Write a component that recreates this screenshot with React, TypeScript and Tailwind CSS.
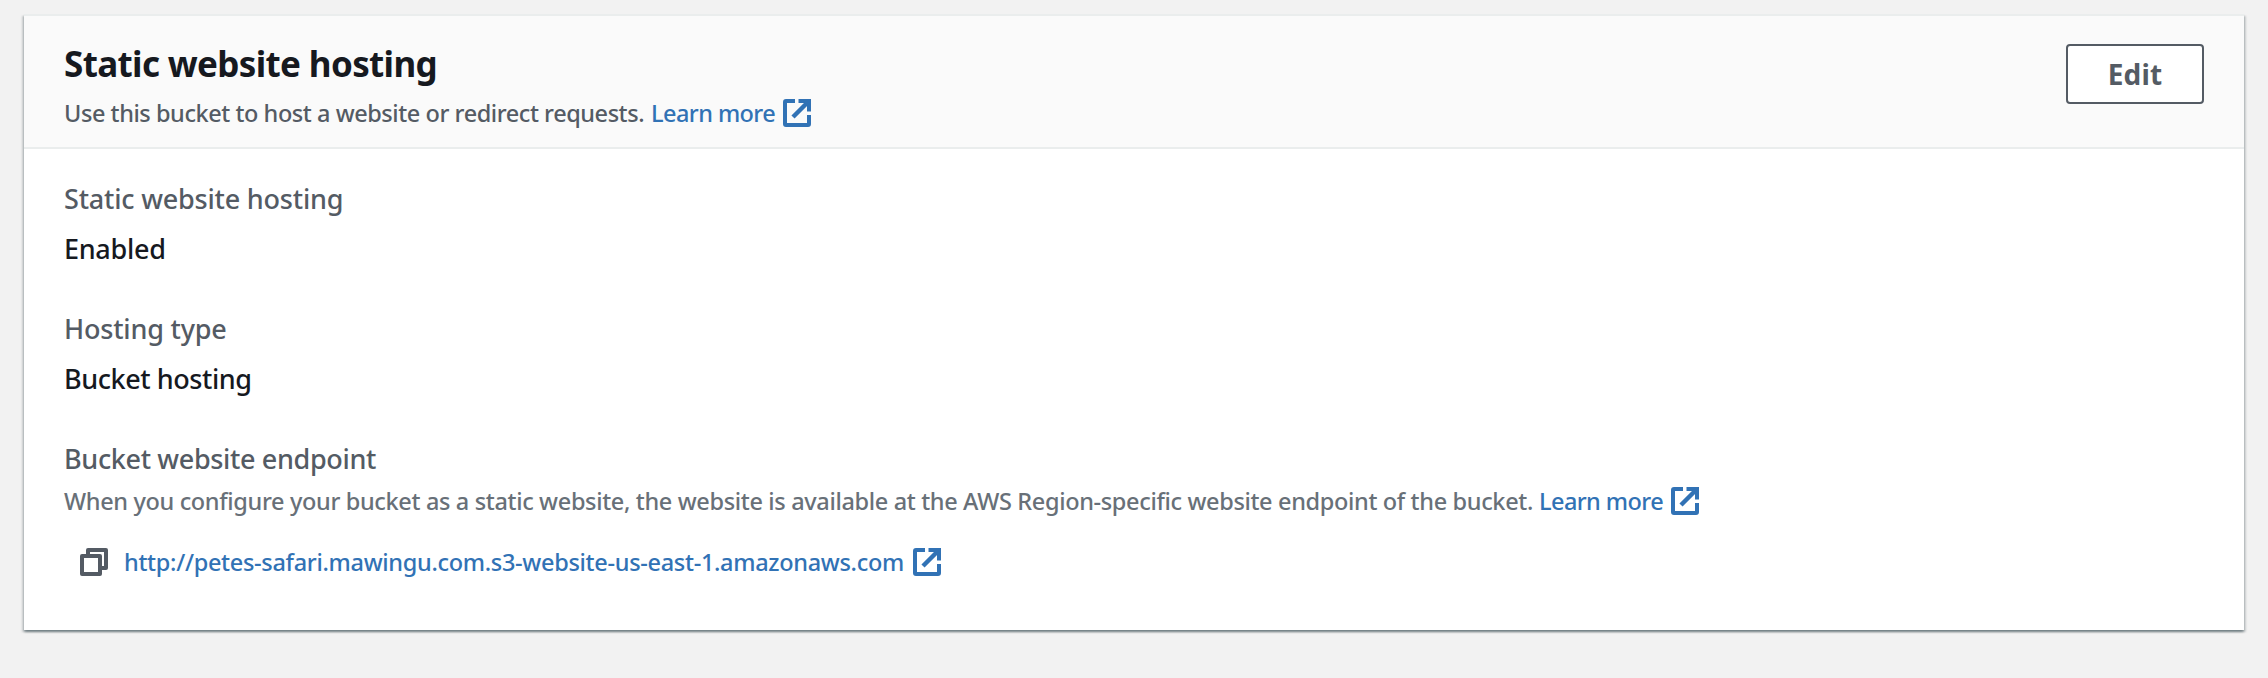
function ExternalIcon() {
  return (
    <svg viewBox="0 0 28 28" className="h-7 w-7 shrink-0" fill="none" stroke="currentColor" strokeWidth="4">
      <path d="M12 2H3Q2 2 2 3V25Q2 26 3 26H25Q26 26 26 25V16" />
      <path d="M15.5 2H26V12.5" />
      <path d="M25 3L10 18" strokeWidth="4.5" />
    </svg>
  );
}

function CopyIcon() {
  return (
    <svg viewBox="0 0 28 28" className="h-7 w-7 shrink-0" fill="none" stroke="currentColor" strokeWidth="4" strokeLinejoin="round">
      <path d="M2 8H20V26H2Z" />
      <path d="M8 8V2H26V20H20" />
    </svg>
  );
}

export default function App() {
  return (
    <div className="h-[678px] w-[2268px] overflow-hidden bg-[#f2f2f2] px-6 pt-[14px] font-['Noto_Sans',sans-serif] text-[27px] leading-9 font-medium whitespace-nowrap text-[#16191f]">
      <section className="h-[616px] bg-white shadow-[0_2px_2px_0_rgba(0,28,36,0.35),2px_2px_2px_0_rgba(0,28,36,0.15),-2px_2px_2px_0_rgba(0,28,36,0.15)]">
        <header className="flex h-[135px] items-start justify-between border-y-2 border-t-[#eaeded] border-b-[#eaeded] bg-[#fafafa] pr-4 pl-10">
          <div className="pt-[26px]">
            <h2 className="text-[35px] leading-[44px] font-bold tracking-[-0.644px]">Static website hosting</h2>
            <div className="mt-[11px] flex items-center text-[23.5px] leading-8 text-[#545b64]">
              <p className="tracking-[-0.443px]">Use this bucket to host a website or redirect requests.</p>
              <a className="ml-[7px] tracking-[-0.58px] text-[#3172b5]">Learn more</a>
              <span className="ml-2 text-[#3172b5]"><ExternalIcon /></span>
            </div>
          </div>
          <button className="mt-7 mr-6 h-[60px] w-[138px] rounded-[4px] border-2 border-[#545b64] bg-white text-[28px] font-bold tracking-[0.2px] text-[#545b64]">
            Edit
          </button>
        </header>
        <dl className="flex flex-col gap-11 px-10 pt-8">
          <div>
            <dt className="tracking-[-0.2px] text-[#545b64]">Static website hosting</dt>
            <dd className="mt-[14px] tracking-[-0.3px]">Enabled</dd>
          </div>
          <div>
            <dt className="tracking-[-0.2px] text-[#545b64]">Hosting type</dt>
            <dd className="mt-[14px] tracking-[-0.43px]">Bucket hosting</dd>
          </div>
          <div>
            <dt className="tracking-[-0.351px] text-[#545b64]">Bucket website endpoint</dt>
            <dd className="mt-2 flex items-center text-[23.5px] leading-8 text-[#687078]">
              <p className="tracking-[-0.347px]">
                When you configure your bucket as a static website, the website is available at the AWS Region-specific website endpoint of the bucket.
              </p>
              <a className="ml-[6px] tracking-[-0.58px] text-[#3172b5]">Learn more</a>
              <span className="ml-2 text-[#3172b5]"><ExternalIcon /></span>
            </dd>
            <dd className="mt-[29px] flex items-center pl-4 text-[23.5px] leading-8 text-[#3172b5]">
              <span className="text-[#545b64]"><CopyIcon /></span>
              <a className="ml-4 tracking-[-0.306px]">http://petes-safari.mawingu.com.s3-website-us-east-1.amazonaws.com</a>
              <span className="ml-[9px]"><ExternalIcon /></span>
            </dd>
          </div>
        </dl>
      </section>
    </div>
  );
}
